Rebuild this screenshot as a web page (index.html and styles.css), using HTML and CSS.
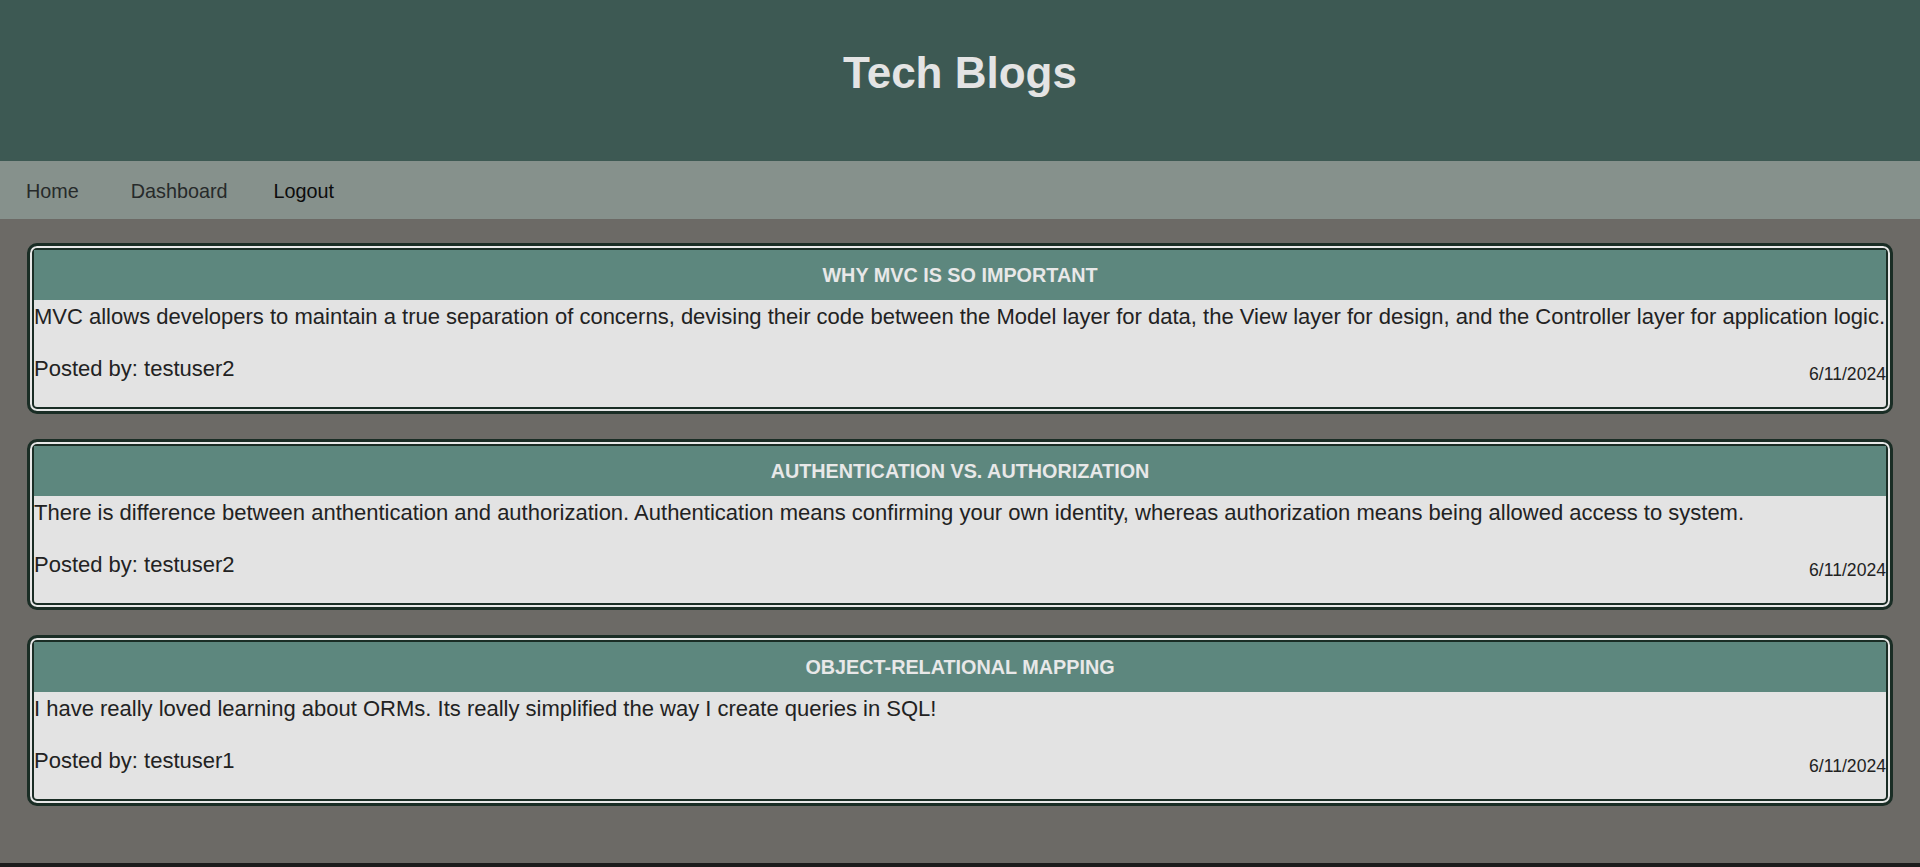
FILE: index.html
```html
<!DOCTYPE html>
<html lang="en">
<head>
<meta charset="utf-8">
<title>Tech Blogs</title>
<link rel="stylesheet" href="styles.css">
</head>
<body>
<header class="site-header">
  <h1 class="site-title">Tech Blogs</h1>
</header>
<nav class="site-nav">
  <a class="nav-link" href="#">Home</a>
  <a class="nav-link" href="#">Dashboard</a>
  <a class="nav-link nav-logout" href="#">Logout</a>
</nav>
<main class="posts">
  <article class="card">
    <h2 class="card-title">Why MVC is so important</h2>
    <div class="card-body">
      <p class="card-text">MVC allows developers to maintain a true separation of concerns, devising their code between the Model layer for data, the View layer for design, and the Controller layer for application logic.</p>
      <div class="card-meta">
        <span class="card-author">Posted by: testuser2</span>
        <span class="card-date">6/11/2024</span>
      </div>
    </div>
  </article>
  <article class="card">
    <h2 class="card-title">Authentication vs. Authorization</h2>
    <div class="card-body">
      <p class="card-text">There is difference between anthentication and authorization. Authentication means confirming your own identity, whereas authorization means being allowed access to system.</p>
      <div class="card-meta">
        <span class="card-author">Posted by: testuser2</span>
        <span class="card-date">6/11/2024</span>
      </div>
    </div>
  </article>
  <article class="card">
    <h2 class="card-title">Object-Relational Mapping</h2>
    <div class="card-body">
      <p class="card-text">I have really loved learning about ORMs. Its really simplified the way I create queries in SQL!</p>
      <div class="card-meta">
        <span class="card-author">Posted by: testuser1</span>
        <span class="card-date">6/11/2024</span>
      </div>
    </div>
  </article>
</main>
<footer class="page-bottom"></footer>
</body>
</html>
```
FILE: styles.css
```css
html, body {
  margin: 0;
  padding: 0;
}
body {
  font-family: "Liberation Sans", Arial, sans-serif;
  background: #1c1c1c;
  color: #222;
  height: 867px;
  display: flex;
  flex-direction: column;
}
.site-header {
  background: #3d5953;
  height: 161px;
  box-sizing: border-box;
  padding-top: 47px;
}
.site-title {
  margin: 0;
  text-align: center;
  font-size: 44px;
  font-weight: bold;
  line-height: 51px;
  color: #e4e4e4;
}
.site-nav {
  background: #86918c;
  height: 58px;
  display: flex;
  align-items: center;
  padding-top: 1px;
  box-sizing: border-box;
}
.nav-link {
  font-size: 19.8px;
  color: #262a2a;
  text-decoration: none;
  padding: 0 26px;
  line-height: 22px;
}
.nav-logout {
  color: #0c0c0c;
  padding-left: 20px;
}
.posts {
  flex: 1;
  background: #6c6a66;
  padding: 24px 27px 0;
  display: flex;
  flex-direction: column;
  gap: 25px;
}
.card {
  border: 3px solid #1a2d25;
  border-radius: 10px;
  padding: 4px;
  background: #e3e3e3;
  box-shadow: inset 0 0 0 2px #e8e8e8, inset 0 0 0 4px #1a2d25;
}
.card-title {
  margin: 0;
  background: #5d877e;
  color: #e8e8e8;
  font-size: 19.8px;
  font-weight: bold;
  text-transform: uppercase;
  text-align: center;
  height: 50px;
  line-height: 50px;
}
.card-body {
  padding: 4px 0 23px;
}
.card-text {
  margin: 0;
  font-size: 22px;
  line-height: 25px;
}
.card-meta {
  margin-top: 27px;
  display: flex;
  justify-content: space-between;
  align-items: flex-start;
}
.card-author {
  font-size: 22px;
  line-height: 25px;
}
.card-date {
  font-size: 17.6px;
  line-height: 20px;
  padding-top: 8px;
}
.page-bottom {
  height: 4px;
  background: #1c1c1c;
}
```
